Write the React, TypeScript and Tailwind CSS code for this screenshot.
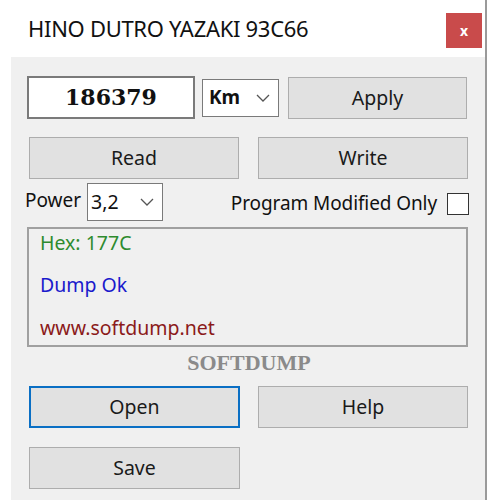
import React from "react";

const font = { fontFamily: '"Noto Sans", "Open Sans", sans-serif' };

function Chevron() {
  return (
    <svg width="14" height="8" viewBox="0 0 14 8" fill="none">
      <path d="M1 1 L7 7 L13 1" stroke="#555" strokeWidth="1.3" />
    </svg>
  );
}

function Btn({ label, w, focus }: { label: string; w: string; focus?: boolean }) {
  return (
    <div
      className={`${w} h-[42px] flex items-center justify-center bg-[#e1e1e1] text-[19.5px] text-[#1a1a1a] ${
        focus ? "border-2 border-[#0a6fc4]" : "border border-[#adadad]"
      }`}
    >
      {label}
    </div>
  );
}

export default function App() {
  return (
    <div className="w-[500px] h-[500px] bg-white relative overflow-hidden" style={font}>
      <div className="absolute left-[485px] top-0 w-[2px] h-[500px] bg-[#9a9a9a]" />
      <div className="h-[57px] flex items-center w-[485px]">
        <div className="ml-[28px] text-[22px] text-[#111] tracking-[-0.3px]">HINO DUTRO YAZAKI 93C66</div>
        <div className="ml-auto mr-[3px] mt-[4px] w-[36px] h-[35px] bg-[#c94b4b] flex items-center justify-center text-white font-bold text-[14px]">
          x
        </div>
      </div>
      <div className="ml-[11px] w-[474px] h-[443px] bg-[#f0f0f0] flex flex-col">
        {/* row 1 */}
        <div className="flex items-center mt-[18px] h-[45px]">
          <div
            className="ml-[16px] w-[168px] h-[43px] bg-white border-2 border-[#7a7a7a] flex items-center justify-center text-[22px] font-bold text-[#111]"
            style={{ fontFamily: '"DejaVu Serif", "Liberation Serif", serif' }}
          >
            186379
          </div>
          <div className="ml-[7px] w-[77px] h-[38px] bg-white border border-[#7a7a7a] flex items-center pl-[6px] pr-[8px]">
            <span className="text-[19px] font-bold text-[#111]">Km</span>
            <span className="ml-auto"><Chevron /></span>
          </div>
          <div className="ml-[9px]">
            <Btn label="Apply" w="w-[179px]" />
          </div>
        </div>
        {/* row 2 */}
        <div className="flex mt-[17px]">
          <div className="ml-[18px]"><Btn label="Read" w="w-[210px]" /></div>
          <div className="ml-[19px]"><Btn label="Write" w="w-[210px]" /></div>
        </div>
        {/* row 3 */}
        <div className="flex items-center mt-[3px] h-[39px]">
          <span className="ml-[14px] text-[19px] text-[#111] -mt-[2px]">Power</span>
          <div className="ml-[6px] w-[76px] h-[38px] bg-white border border-[#7a7a7a] flex items-center pl-[3px] pr-[8px]">
            <span className="text-[19.5px] text-[#111]">3,2</span>
            <span className="ml-auto"><Chevron /></span>
          </div>
          <span className="ml-auto text-[19px] text-[#111] mt-[4px] tracking-[-0.1px]">Program Modified Only</span>
          <div className="ml-[10px] mr-[16px] mt-[4px] w-[22px] h-[22px] bg-white border border-[#333]" />
        </div>
        {/* panel */}
        <div className="ml-[16px] mt-[6px] w-[441px] h-[120px] border-2 border-[#a0a0a0] flex flex-col pl-[11px] text-[19.5px]">
          <div className="text-[#2e8b2e] -mt-[1px] h-[30px] leading-[30px]">Hex: 177C</div>
          <div className="text-[#1a1acc] mt-[12px] h-[30px] leading-[30px]">Dump Ok</div>
          <div className="text-[#8b1a1a] mt-[13px] h-[30px] leading-[30px]">www.softdump.net</div>
        </div>
        <div
          className="text-center text-[22px] font-bold text-[#8a8a8a] mt-[3px] h-[26px] leading-[26px] pl-[2px]"
          style={{ fontFamily: '"Liberation Serif", serif' }}
        >
          SOFTDUMP
        </div>
        <div className="flex mt-[10px]">
          <div className="ml-[18px]"><Btn label="Open" w="w-[211px]" focus /></div>
          <div className="ml-[18px]"><Btn label="Help" w="w-[210px]" /></div>
        </div>
        <div className="flex mt-[19px]">
          <div className="ml-[18px]"><Btn label="Save" w="w-[211px]" /></div>
        </div>
      </div>
    </div>
  );
}
